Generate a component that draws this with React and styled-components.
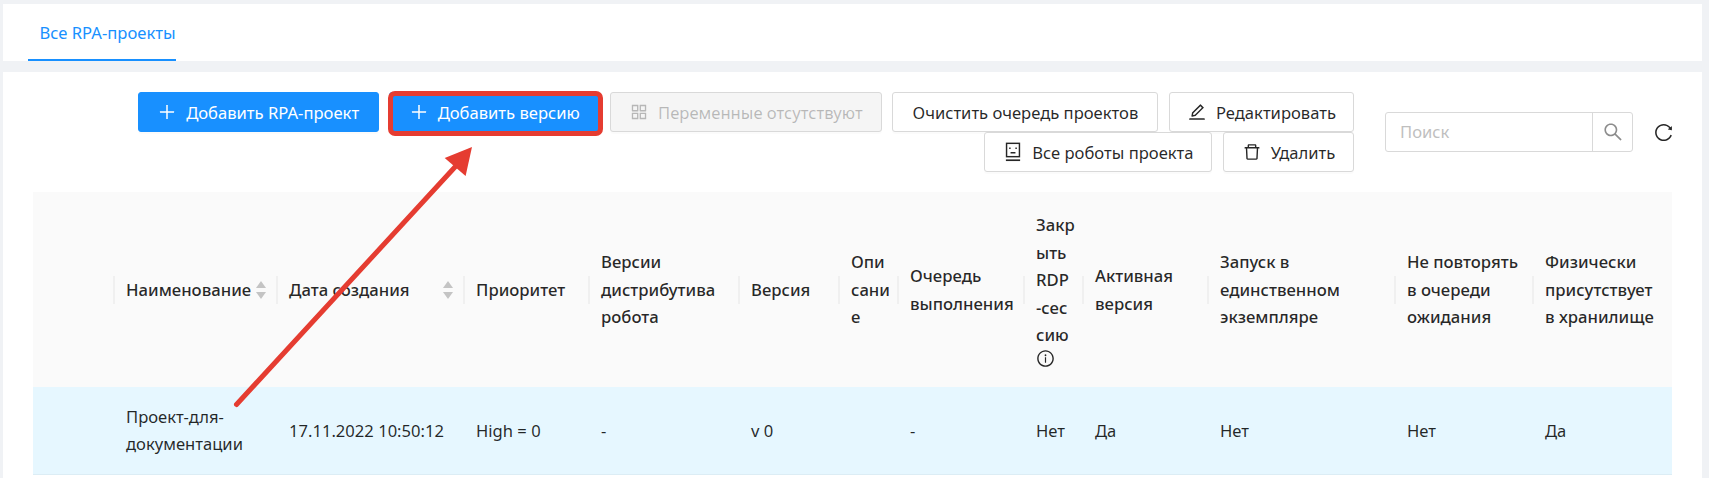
import styled, { createGlobalStyle } from "styled-components";
import {
  AiOutlinePlus,
  AiOutlineAppstore,
  AiOutlineEdit,
  AiOutlineDelete,
  AiOutlineSearch,
  AiOutlineReload,
  AiOutlineInfoCircle,
} from "react-icons/ai";

const GlobalStyle = createGlobalStyle`
  html, body {
    margin: 0;
    padding: 0;
    height: 478px;
    overflow: hidden;
    background: #f0f2f5;
  }
  body {
    font-family: "Noto Sans", "Open Sans", sans-serif;
    font-size: 16.6px;
    color: rgba(0, 0, 0, 0.85);
  }
`;

const columns = [
  { width: 82, title: "" },
  { width: 163, title: "Наименование", sorter: true },
  { width: 187, title: "Дата создания", sorter: true },
  { width: 125, title: "Приоритет" },
  { width: 150, title: "Версии дистрибутива робота" },
  { width: 100, title: "Версия" },
  { width: 59, title: "Описание", breakAll: true },
  { width: 126, title: "Очередь выполнения" },
  { width: 59, title: "Закрыть RDP\n-сес\nсию", breakAll: true, info: true },
  { width: 125, title: "Активная версия" },
  { width: 187, title: "Запуск в единственном экземпляре" },
  { width: 138, title: "Не повторять в очереди ожидания" },
  { width: 138, title: "Физически присутствует в хранилище", last: true },
];

const row = ["", "Проект-для-документации", "17.11.2022 10:50:12", "High = 0", "-", "v 0", "", "-", "Нет", "Да", "Нет", "Нет", "Да"];

const Page = styled.div`
  position: relative;
  width: 1709px;
  height: 478px;
  overflow: hidden;
  padding: 4px 7px 0 3px;
  box-sizing: border-box;
`;

const TabsCard = styled.div`
  height: 57px;
  background: #fff;
  padding-left: 25px;
  display: flex;
  margin-bottom: 11px;
`;

const Tab = styled.div`
  width: 148px;
  height: 57px;
  box-sizing: border-box;
  padding: 17px 0 0 11.5px;
  white-space: nowrap;
  font-size: 16.6px;
  color: #1890ff;
  border-bottom: 2px solid #1890ff;
`;

const ContentCard = styled.div`
  background: #fff;
  height: 406px;
  padding: 20px 30px 0;
  box-sizing: border-box;
`;

const Toolbar = styled.div`
  display: flex;
  align-items: center;
  padding-left: 104px;
  margin-bottom: 20px;
`;

const ButtonGroup = styled.div`
  flex: 1;
  display: flex;
  flex-wrap: wrap;
  justify-content: flex-end;
  gap: 0 10.6px;
`;

const Button = styled.button`
  position: relative;
  height: 40px;
  box-sizing: border-box;
  display: inline-flex;
  align-items: center;
  justify-content: center;
  gap: 9px;
  padding: 0;
  width: ${(p) => p.$w}px;
  font: inherit;
  border-radius: 3px;
  border: 1px solid ${(p) => (p.$primary ? "#1890ff" : "#d9d9d9")};
  background: ${(p) => (p.$primary ? "#1890ff" : p.disabled ? "#f5f5f5" : "#fff")};
  color: ${(p) => (p.$primary ? "#fff" : p.disabled ? "rgba(0,0,0,0.25)" : "rgba(0,0,0,0.85)")};
  box-shadow: 0 2px 0 rgba(0, 0, 0, 0.015);

  svg {
    width: 20px;
    height: 20px;
    flex: none;
  }
`;

const Highlight = styled.span`
  position: absolute;
  left: -2px;
  top: -2px;
  right: -5px;
  bottom: -5px;
  border: 5px solid #e53c31;
  border-radius: 7px;
  pointer-events: none;
`;

const Search = styled.div`
  width: 248px;
  height: 40px;
  margin-left: 31px;
  display: flex;
  box-sizing: border-box;
  border: 1px solid #d9d9d9;
  border-radius: 3px;
`;

const SearchText = styled.div`
  flex: 1;
  padding-left: 14px;
  line-height: 38px;
  color: #bfbfbf;
`;

const SearchIcon = styled.div`
  width: 39px;
  border-left: 1px solid #d9d9d9;
  display: flex;
  align-items: center;
  justify-content: center;
  color: rgba(0, 0, 0, 0.45);
  font-size: 22px;
`;

const Refresh = styled.div`
  width: 39px;
  box-sizing: border-box;
  padding-left: 20px;
  display: flex;
  font-size: 21px;
  color: rgba(0, 0, 0, 0.85);

  svg {
    flex: none;
  }
`;

const Table = styled.table`
  width: 1639px;
  table-layout: fixed;
  border-collapse: collapse;
`;

const HeadCell = styled.th`
  position: relative;
  height: 195px;
  padding: 0 ${(p) => (p.$breakAll ? 8 : 11)}px 0 11px;
  box-sizing: border-box;
  background: #fafafa;
  text-align: left;
  font-size: 16.7px;
  font-weight: 500;
  line-height: 27.5px;
  white-space: pre-line;
  word-break: ${(p) => (p.$breakAll ? "break-all" : "normal")};

  &::after {
    content: ${(p) => (p.$last ? "none" : '""')};
    position: absolute;
    right: 0;
    top: 50%;
    width: 2px;
    height: 28px;
    transform: translateY(-50%);
    background: #f0f0f0;
  }
`;

const HeadInner = styled.div`
  display: flex;
  align-items: center;
  justify-content: space-between;
`;

const SortArrows = styled.svg`
  width: 12px;
  height: 20px;
  flex: none;
  fill: #c4c4c4;
`;

const InfoIcon = styled(AiOutlineInfoCircle)`
  display: block;
  width: 19px;
  height: 19px;
`;

const BodyCell = styled.td`
  height: 87px;
  padding: 0 11px;
  box-sizing: border-box;
  background: #e6f7ff;
  border-bottom: 1px solid #dcedf5;
  font-size: 16.6px;
  line-height: 27.5px;
`;

const Annotation = styled.svg`
  position: absolute;
  left: 0;
  top: 0;
  pointer-events: none;
`;

const RobotIcon = () => (
  <svg viewBox="0 0 18 18" fill="none" stroke="currentColor" strokeWidth="1.3">
    <rect x="3.2" y="1.2" width="11.6" height="12" />
    <path d="M2.6 16.4h12.8" strokeWidth="1.5" />
    <path d="M6.2 5v1.4M11.8 5v1.4M6.8 9.6h4.4" />
  </svg>
);

const Sorter = () => (
  <SortArrows viewBox="0 0 12 20">
    <path d="M6 1l5 7H1z" />
    <path d="M6 19l5-7H1z" />
  </SortArrows>
);

const App = () => {
  return (
    <Page>
      <GlobalStyle />
      <TabsCard>
        <Tab>Все RPA-проекты</Tab>
      </TabsCard>
      <ContentCard>
        <Toolbar>
          <ButtonGroup>
            <Button $primary $w={241}>
              <AiOutlinePlus />
              Добавить RPA-проект
            </Button>
            <Button $primary $w={210}>
              <AiOutlinePlus />
              Добавить версию
              <Highlight />
            </Button>
            <Button disabled $w={272}>
              <AiOutlineAppstore />
              Переменные отсутствуют
            </Button>
            <Button $w={266}>Очистить очередь проектов</Button>
            <Button $w={185}>
              <AiOutlineEdit />
              Редактировать
            </Button>
            <Button $w={228}>
              <RobotIcon />
              Все роботы проекта
            </Button>
            <Button $w={131}>
              <AiOutlineDelete />
              Удалить
            </Button>
          </ButtonGroup>
          <Search>
            <SearchText>Поиск</SearchText>
            <SearchIcon>
              <AiOutlineSearch />
            </SearchIcon>
          </Search>
          <Refresh>
            <AiOutlineReload />
          </Refresh>
        </Toolbar>
        <Table>
          <colgroup>
            {columns.map((c, i) => (
              <col key={i} style={{ width: c.width }} />
            ))}
          </colgroup>
          <thead>
            <tr>
              {columns.map((c, i) => (
                <HeadCell key={i} $breakAll={c.breakAll} $last={c.last}>
                  {c.sorter ? (
                    <HeadInner>
                      {c.title}
                      <Sorter />
                    </HeadInner>
                  ) : (
                    c.title
                  )}
                  {c.info && <InfoIcon />}
                </HeadCell>
              ))}
            </tr>
          </thead>
          <tbody>
            <tr>
              {row.map((v, i) => (
                <BodyCell key={i}>{v}</BodyCell>
              ))}
            </tr>
          </tbody>
        </Table>
      </ContentCard>
      <Annotation width="1709" height="478">
        <path d="M236.5 404.5L455 167" stroke="#e53c31" strokeWidth="5" strokeLinecap="round" />
        <path d="M472 147L444.7 158L465.6 176Z" fill="#e53c31" />
      </Annotation>
    </Page>
  );
};

export default App;
